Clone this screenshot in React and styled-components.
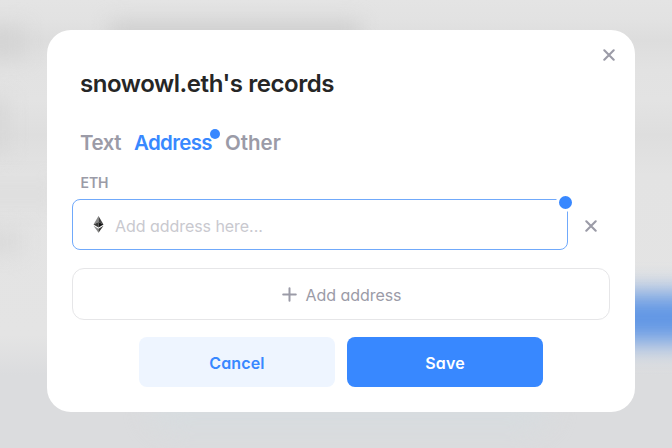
import React from "react";
import styled, { createGlobalStyle, css } from "styled-components";

const GlobalStyle = createGlobalStyle`
  *, *::before, *::after { box-sizing: border-box; }
  body { margin: 0; overflow: hidden; }
  button, input {
    font: inherit;
    letter-spacing: inherit;
    font-feature-settings: inherit;
    border: 0;
    padding: 0;
    margin: 0;
    background: none;
  }
`;

const Backdrop = styled.div`
  position: relative;
  display: flex;
  align-items: flex-start;
  width: 672px;
  height: 448px;
  padding: 30px 37px 0 47px;
  overflow: hidden;
  background: linear-gradient(
    #e4e4e4 0, #e2e2e2 20px, #dddddd 40px, #e2e2e2 70px, #e3e3e3 100px,
    #dedede 135px, #e3e3e3 175px, #e4e4e4 335px, #dbdcde 375px, #dbdcde 448px
  );
  font-family: Inter, "Liberation Sans", sans-serif;
  font-feature-settings: "cv11" 1;
  color: #9b9ba7;
`;

const Blot = styled.div`
  position: absolute;
  left: ${(p) => p.$x}px;
  top: ${(p) => p.$y}px;
  width: ${(p) => p.$w}px;
  height: ${(p) => p.$h}px;
  border-radius: ${(p) => p.$r || 0}px;
  background: ${(p) => p.$color};
  filter: blur(${(p) => p.$blur || 10}px);
`;

const Modal = styled.section`
  position: relative;
  width: 588px;
  height: 382px;
  padding: 36px 25px 25px;
  border-radius: 24px;
  background: #fff;
  display: flex;
  flex-direction: column;
`;

const IconButton = styled.button`
  display: flex;
  align-items: center;
  justify-content: center;
  width: 24px;
  height: 24px;
  color: #9b9ba7;
`;

const CloseButton = styled(IconButton)`
  position: absolute;
  top: 13px;
  right: 14px;
`;

const RemoveButton = styled(IconButton)`
  margin-top: 2px;
`;

const Title = styled.h1`
  margin: 0 0 0 8px;
  height: 36px;
  line-height: 36px;
  font-size: 24px;
  font-weight: 600;
  letter-spacing: -0.43px;
  color: #262626;
`;

const Tabs = styled.nav`
  display: flex;
  gap: 13px;
  margin: 25px 0 0 8px;
  height: 32px;
  line-height: 32px;
  font-size: 20.5px;
  font-weight: 600;
`;

const Tab = styled.button`
  position: relative;
  width: ${(p) => p.$width}px;
  white-space: nowrap;
  text-align: left;
  letter-spacing: ${(p) => p.$spacing}px;
  color: ${(p) => (p.$active ? "#3888ff" : "#9b9ba7")};
`;

const dot = css`
  position: absolute;
  border-radius: 50%;
  background: #3888ff;
`;

const TabDot = styled.span`
  ${dot}
  top: 2px;
  right: -8px;
  width: 10px;
  height: 10px;
`;

const Label = styled.label`
  margin: 14px 0 0 8.5px;
  height: 20px;
  line-height: 20px;
  font-size: 14px;
  font-weight: 600;
  letter-spacing: -0.1px;
`;

const FieldRow = styled.div`
  display: flex;
  align-items: center;
  gap: 11px;
  margin-top: 6px;
`;

const Field = styled.div`
  position: relative;
  display: flex;
  align-items: center;
  gap: 11px;
  width: 496px;
  height: 51px;
  padding-left: 20px;
  border: 1px solid #70a9fb;
  border-radius: 8px;
`;

const FieldDot = styled.span`
  ${dot}
  top: -7px;
  right: -8px;
  width: 19px;
  height: 19px;
  border: 3px solid #fff;
`;

const AddressInput = styled.input`
  width: 400px;
  height: 24px;
  margin-top: 3px;
  font-size: 16px;
  letter-spacing: -0.05px;
  outline: 0;
  &::placeholder { color: #c9c9cf; opacity: 1; }
`;

const AddButton = styled.button`
  display: flex;
  align-items: center;
  justify-content: center;
  gap: 9px;
  height: 52px;
  padding-left: 1px;
  margin-top: 18px;
  border: 1px solid #e6e6e8;
  border-radius: 12px;
  font-size: 16px;
  color: #9b9ba7;
  letter-spacing: -0.05px;
`;

const AddText = styled.span`
  margin-top: 1px;
`;

const Actions = styled.footer`
  display: flex;
  justify-content: center;
  gap: 12px;
  margin-top: 17px;
`;

const ActionButton = styled.button`
  width: 196px;
  height: 50px;
  padding-top: 2px;
  border-radius: 8px;
  font-size: 16px;
  font-weight: 600;
  letter-spacing: 0.15px;
  color: ${(p) => (p.$primary ? "#fff" : "#3888ff")};
  background: ${(p) => (p.$primary ? "#3888ff" : "#eef5ff")};
`;

const CrossIcon = () => (
  <svg width="12" height="12" viewBox="0 0 12 12" fill="none" stroke="currentColor" strokeWidth="2.1" strokeLinecap="round">
    <path d="M1.3 1.3l9.4 9.4M10.7 1.3l-9.4 9.4" />
  </svg>
);

const PlusIcon = () => (
  <svg width="15" height="15" viewBox="0 0 15 15" fill="none" stroke="currentColor" strokeWidth="2" strokeLinecap="round">
    <path d="M7.5 1.2v12.6M1.2 7.5h12.6" />
  </svg>
);

const EthIcon = () => (
  <svg width="11" height="17" viewBox="0 0 11 17">
    <path d="M5.5 0L0.5 8.4 5.5 6.1z" fill="#8a8a8a" />
    <path d="M5.5 0l5 8.4-5-2.3z" fill="#444" />
    <path d="M.5 8.4l5-2.3v5.3z" fill="#3c3c3b" />
    <path d="M10.5 8.4l-5-2.3v5.3z" fill="#151515" />
    <path d="M.5 9.7l5 3v4z" fill="#8a8a8a" />
    <path d="M10.5 9.7l-5 3v4z" fill="#3c3c3b" />
  </svg>
);

export default function App() {
  return (
    <>
      <GlobalStyle />
      <Backdrop>
        <Blot $x={110} $y={22} $w={250} $h={30} $color="#cfcfcf" />
        <Blot $x={-30} $y={26} $w={55} $h={32} $color="#d4d4d4" />
        <Blot $x={-30} $y={98} $w={40} $h={55} $color="#d8d8d8" />
        <Blot $x={-30} $y={180} $w={90} $h={28} $color="#dedede" />
        <Blot $x={-30} $y={230} $w={52} $h={24} $color="#dadada" />
        <Blot $x={150} $y={380} $w={400} $h={50} $r={60} $color="#d7dcdf" $blur={12} />
        <Blot $x={590} $y={293} $w={140} $h={50} $color="#6096e5" $blur={13} />
        <Modal>
          <CloseButton aria-label="Close"><CrossIcon /></CloseButton>
          <Title>snowowl.eth's records</Title>
          <Tabs>
            <Tab $width={41} $spacing={-0.45}>Text</Tab>
            <Tab $width={78} $spacing={-0.65} $active>Address<TabDot /></Tab>
            <Tab $width={57} $spacing={0}>Other</Tab>
          </Tabs>
          <Label htmlFor="eth-address">ETH</Label>
          <FieldRow>
            <Field>
              <EthIcon />
              <AddressInput id="eth-address" placeholder="Add address here..." />
              <FieldDot />
            </Field>
            <RemoveButton aria-label="Remove address"><CrossIcon /></RemoveButton>
          </FieldRow>
          <AddButton>
            <PlusIcon />
            <AddText>Add address</AddText>
          </AddButton>
          <Actions>
            <ActionButton>Cancel</ActionButton>
            <ActionButton $primary>Save</ActionButton>
          </Actions>
        </Modal>
      </Backdrop>
    </>
  );
}
